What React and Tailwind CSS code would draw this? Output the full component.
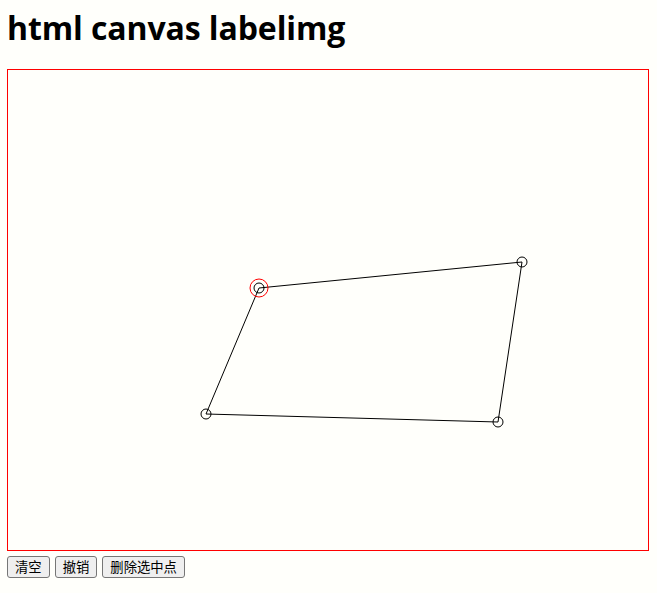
export default function App() {
  // polygon vertices in canvas coords
  const points = [
    { x: 251, y: 218 },
    { x: 514, y: 192 },
    { x: 490, y: 352 },
    { x: 198, y: 344 },
  ];
  const selected = 0;
  const poly = points.map((p) => `${p.x},${p.y}`).join(" ");

  return (
    <div className="min-h-screen w-full bg-[#fffffb] px-[7px] pt-[9px] font-['Liberation_Sans',sans-serif]">
      <h1 className="text-[32px] leading-[37px] font-bold text-black font-['Open_Sans','Noto_Sans',sans-serif] tracking-[-0.1px] mb-[23px]">
        html canvas labelimg
      </h1>

      <div className="w-[642px] h-[482px] border border-[#ff0000]">
        <svg width="640" height="480" viewBox="0 0 640 480" className="block">
          <polygon
            points={poly}
            fill="none"
            stroke="#000"
            strokeWidth="1"
          />
          {points.map((p, i) => (
            <circle
              key={i}
              cx={p.x}
              cy={p.y}
              r="5"
              fill="none"
              stroke="#000"
              strokeWidth="1"
            />
          ))}
          <circle
            cx={points[selected].x}
            cy={points[selected].y}
            r="9"
            fill="none"
            stroke="#ff0000"
            strokeWidth="1"
          />
        </svg>
      </div>

      <div className="flex gap-[5px] mt-[5px]">
        {["清空", "撤销", "删除选中点"].map((label) => (
          <button
            key={label}
            className="h-[22px] px-[7px] bg-[#efefef] border border-[#767676] rounded-[3px] text-[13.33px] leading-none text-black font-['Noto_Sans_CJK_SC',sans-serif]"
          >
            {label}
          </button>
        ))}
      </div>
    </div>
  );
}
